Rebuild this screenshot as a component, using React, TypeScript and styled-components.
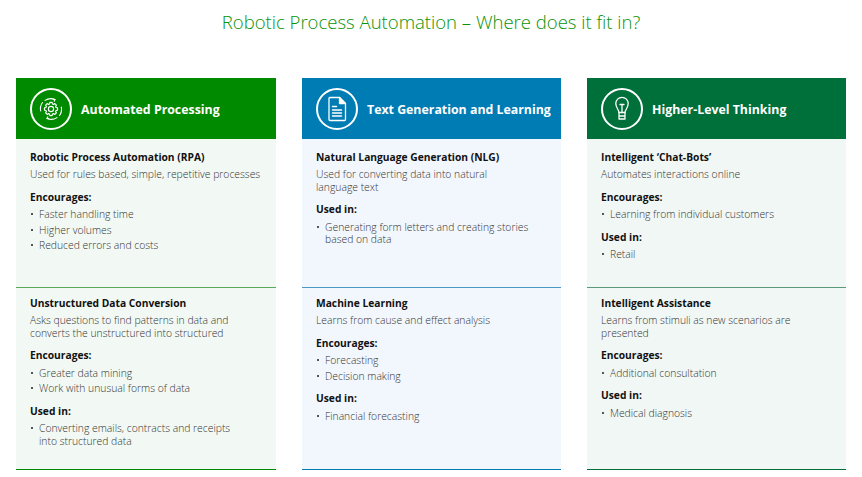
import React from 'react';
import styled, { createGlobalStyle } from 'styled-components';

const GlobalStyle = createGlobalStyle`
  html, body {
    margin: 0;
    padding: 0;
    background: #fff;
    font-family: "Open Sans", "Liberation Sans", sans-serif;
  }
`;

const Page = styled.div`
  width: 862px;
  height: 477px;
  overflow: hidden;
  padding: 0 16px;
  box-sizing: border-box;
`;

const Title = styled.h1`
  margin: 0;
  padding-top: 9px;
  height: 78px;
  box-sizing: border-box;
  text-align: center;
  font-size: 18.55px;
  line-height: 26px;
  font-weight: 300;
  color: #0a930a;
`;

const Columns = styled.div`
  display: grid;
  grid-template-columns: 260px 259px 259px;
  column-gap: 26px;
`;

const Column = styled.section`
  display: grid;
  grid-template-rows: 61px 149px 182px;
`;

const Header = styled.div<{ $color: string }>`
  display: flex;
  align-items: center;
  gap: 9px;
  padding-left: 14px;
  background: ${(p) => p.$color};
`;

const IconRing = styled.div`
  width: 38px;
  height: 38px;
  border: 2px solid #fff;
  border-radius: 50%;
  display: flex;
  align-items: center;
  justify-content: center;
  flex: none;
`;

const HeaderText = styled.h2`
  margin: 0;
  padding-top: 1px;
  font-size: 12.35px;
  font-weight: 700;
  color: #fff;
  white-space: nowrap;
`;

const Block = styled.div<{ $bg: string; $line: string; $top: number }>`
  background: ${(p) => p.$bg};
  border-bottom: 1px solid ${(p) => p.$line};
  padding: ${(p) => p.$top}px 14px 0;
  box-sizing: border-box;
`;

const BlockTitle = styled.h3`
  margin: 0 0 3px;
  font-size: 10.25px;
  line-height: 15px;
  font-weight: 700;
  color: #111;
`;

const Body = styled.p`
  margin: 0;
  color: #333;
  font-weight: 300;
  font-size: 10.35px;
  line-height: 12.5px;
`;

const Label = styled.h4`
  margin: 9.25px 0 3.25px;
  font-size: 10.25px;
  line-height: 15px;
  font-weight: 700;
  color: #111;
`;

const List = styled.ul`
  margin: 0;
  padding: 0;
  list-style: none;
`;

const Item = styled.li`
  position: relative;
  padding-left: 9px;
  margin-bottom: 3px;
  color: #333;
  font-weight: 300;
  font-size: 10.35px;
  line-height: 12.5px;
  &:last-child {
    margin-bottom: 0;
  }
  &::before {
    content: '';
    position: absolute;
    left: 1px;
    top: 5px;
    width: 2px;
    height: 2px;
    background: #555;
  }
`;

const GearIcon = () => (
  <svg width="30" height="30" viewBox="0 0 30 30" fill="none" stroke="#fff" strokeWidth="1.1" strokeLinecap="round" strokeLinejoin="round">
    <g transform="translate(15 15) scale(.72) translate(-15 -16.600)" strokeWidth="1.600">
      <path d="M13.500 7.500h3l.5 2 1.600.7 1.800-1.100 2.100 2.100-1.100 1.800.7 1.600 2 .5v3l-2 .5-.7 1.600 1.100 1.800-2.100 2.100-1.800-1.100-1.600.7-.5 2h-3l-.5-2-1.600-.7-1.800 1.100-2.100-2.100 1.100-1.800-.7-1.600-2-.5v-3l2-.5.7-1.600-1.100-1.800 2.100-2.100 1.800 1.100 1.600-.7z" />
      <circle cx="15" cy="16.600" r="3.600" />
    </g>
    <path d="M6.500 8.500a10.500 10.500 0 0 0-1.800 8.500M23.500 21.500a10.500 10.500 0 0 0 1.800-8.500M9 6.400a10.500 10.500 0 0 1 10-.8M21 23.600a10.500 10.500 0 0 1-10 .8" />
    <path d="M19 5.600l-1.800-.2M19 5.600l-.8 1.600M11 24.400l1.800.2M11 24.400l.8-1.600" />
  </svg>
);

const DocIcon = () => (
  <svg width="20" height="26" viewBox="0 0 20 26" fill="none" stroke="#fff" strokeWidth="1.300" strokeLinecap="round" strokeLinejoin="round">
    <path d="M3 1.500h9.500l6 6v16a1 1 0 0 1-1 1H3a1 1 0 0 1-1-1v-21a1 1 0 0 1 1-1z" />
    <path d="M12.500 1.500v6h6z" fill="#fff" />
    <path d="M5.500 10.500h4M5.500 14h9M5.500 17h9M5.500 20h9" strokeWidth="1.500" />
  </svg>
);

const BulbIcon = () => (
  <svg width="14" height="25" viewBox="0 0 14 25" fill="none" stroke="#fff" strokeWidth="1.300" strokeLinecap="round" strokeLinejoin="round">
    <path d="M4 16.500c0-2.800-3.200-4.200-3.200-9a6.200 6.200 0 0 1 12.400 0c0 4.800-3.200 6.200-3.200 9z" />
    <path d="M5 8.500h4M7 8.500v8" />
    <path d="M4 16.500v6.500h6v-6.500M4 20h6" />
  </svg>
);

type Group = { label: string; items: string[] };
type Entry = { title: string; body: string[]; groups: Group[] };
type Col = {
  color: string;
  bg: string;
  midLine: string;
  icon: React.ReactNode;
  heading: string;
  entries: Entry[];
};

const columns: Col[] = [
  {
    color: '#008a00',
    bg: '#f2f9f4',
    midLine: '#5aa85a',
    icon: <GearIcon />,
    heading: 'Automated Processing',
    entries: [
      {
        title: 'Robotic Process Automation (RPA)',
        body: ['Used for rules based, simple, repetitive processes'],
        groups: [{ label: 'Encourages:', items: ['Faster handling time', 'Higher volumes', 'Reduced errors and costs'] }],
      },
      {
        title: 'Unstructured Data Conversion',
        body: ['Asks questions to find patterns in data and', 'converts the unstructured into structured'],
        groups: [
          { label: 'Encourages:', items: ['Greater data mining', 'Work with unusual forms of data'] },
          { label: 'Used in:', items: ['Converting emails, contracts and receipts\ninto structured data'] },
        ],
      },
    ],
  },
  {
    color: '#007cb5',
    bg: '#f2f7fd',
    midLine: '#4a9ac5',
    icon: <DocIcon />,
    heading: 'Text Generation and Learning',
    entries: [
      {
        title: 'Natural Language Generation (NLG)',
        body: ['Used for converting data into natural', 'language text'],
        groups: [{ label: 'Used in:', items: ['Generating form letters and creating stories\nbased on data'] }],
      },
      {
        title: 'Machine Learning',
        body: ['Learns from cause and effect analysis'],
        groups: [
          { label: 'Encourages:', items: ['Forecasting', 'Decision making'] },
          { label: 'Used in:', items: ['Financial forecasting'] },
        ],
      },
    ],
  },
  {
    color: '#00703a',
    bg: '#f1f7f5',
    midLine: '#5a9a78',
    icon: <BulbIcon />,
    heading: 'Higher-Level Thinking',
    entries: [
      {
        title: 'Intelligent ‘Chat-Bots’',
        body: ['Automates interactions online'],
        groups: [
          { label: 'Encourages:', items: ['Learning from individual customers'] },
          { label: 'Used in:', items: ['Retail'] },
        ],
      },
      {
        title: 'Intelligent Assistance',
        body: ['Learns from stimuli as new scenarios are', 'presented'],
        groups: [
          { label: 'Encourages:', items: ['Additional consultation'] },
          { label: 'Used in:', items: ['Medical diagnosis'] },
        ],
      },
    ],
  },
];

const lines = (text: string) =>
  text.split('\n').map((t, i) => (
    <React.Fragment key={t}>
      {i > 0 && <br />}
      {t}
    </React.Fragment>
  ));

const App = () => {
  return (
    <Page>
      <GlobalStyle />
      <Title>Robotic Process Automation – Where does it fit in?</Title>
      <Columns>
        {columns.map((col) => (
          <Column key={col.heading}>
            <Header $color={col.color}>
              <IconRing>{col.icon}</IconRing>
              <HeaderText>{col.heading}</HeaderText>
            </Header>
            {col.entries.map((entry, i) => (
              <Block
                key={entry.title}
                $bg={col.bg}
                $line={i === 0 ? col.midLine : col.color}
                $top={i === 0 ? 11 : 8}
              >
                <BlockTitle>{entry.title}</BlockTitle>
                <Body>{lines(entry.body.join('\n'))}</Body>
                {entry.groups.map((group) => (
                  <div key={group.label}>
                    <Label>{group.label}</Label>
                    <List>
                      {group.items.map((item) => (
                        <Item key={item}>{lines(item)}</Item>
                      ))}
                    </List>
                  </div>
                ))}
              </Block>
            ))}
          </Column>
        ))}
      </Columns>
    </Page>
  );
};

export default App;
